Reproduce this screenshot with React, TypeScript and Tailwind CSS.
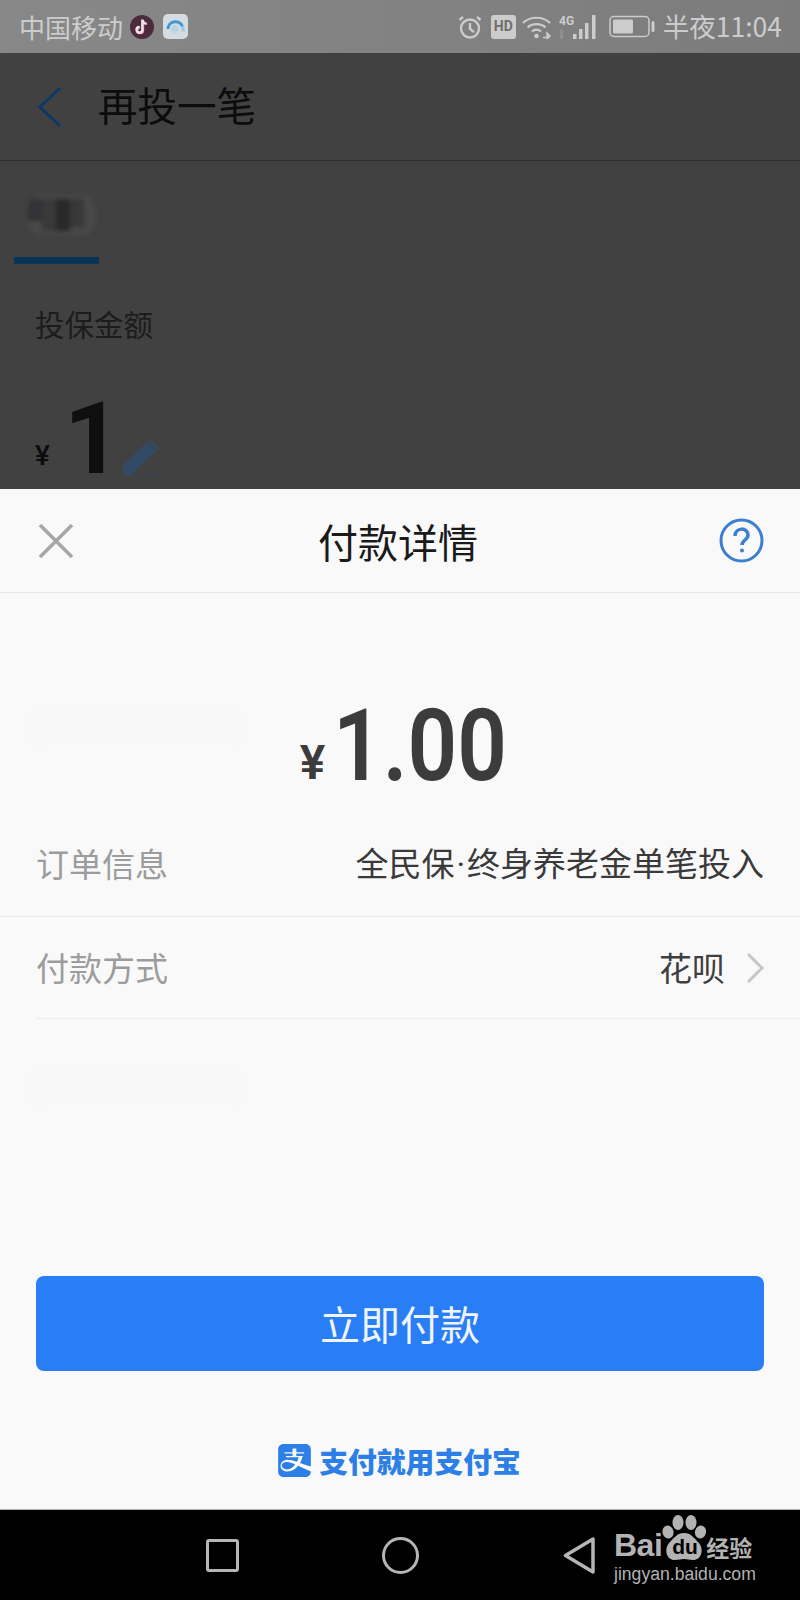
import { SiAlipay } from 'react-icons/si';

const CJK = "font-['Noto_Sans_CJK_SC','Noto_Sans',sans-serif]";

function TikTokIcon() {
  return (
    <svg width="24" height="24" viewBox="0 0 24 24">
      <circle cx="12" cy="12" r="12" fill="#4d2a3c" />
      <path d="M13 5v10.2a2.9 2.9 0 1 1-2.9-2.9" fill="none" stroke="#f4a6b8" strokeWidth="2.4" />
      <path d="M12.2 4.6v10.2a2.9 2.9 0 1 1-2.9-2.9M12.4 5c.4 2.4 2 3.7 4.4 3.9" fill="none" stroke="#e8e8ec" strokeWidth="2.2" />
    </svg>
  );
}

function BrowserIcon() {
  return (
    <svg width="25" height="25" viewBox="0 0 25 25">
      <rect width="25" height="25" rx="5" fill="#d6dde2" />
      <path d="M5 15a7.500 7.500 0 0 1 14.500-2.500" fill="none" stroke="#3f97d8" strokeWidth="3" />
      <path d="M19.500 12.500a7.500 7.500 0 0 1 .5 5" fill="none" stroke="#9fc6de" strokeWidth="3" />
      <circle cx="12" cy="15" r="4" fill="#bcd3e0" />
    </svg>
  );
}

function StatusIcons() {
  return (
    <div className="flex items-center text-[#cccccc]">
      <svg width="24" height="24" viewBox="0 0 24 24" fill="none" stroke="currentColor" strokeWidth="2.400">
        <circle cx="12" cy="13.500" r="9" />
        <path d="M12 8v6l4 3M1.500 5 5 1.800M22.500 5 19 1.800" />
      </svg>
      <div className="ml-[9px] flex h-[24px] w-[25px] items-center justify-center rounded-[3px] bg-[#cccccc] font-['Roboto',sans-serif] text-[14px] font-bold text-[#6e6e6e]">
        HD
      </div>
      <svg className="ml-[6px]" width="30" height="24" viewBox="0 0 30 24" fill="none" stroke="currentColor" strokeWidth="2.200">
        <path d="M1 8c7-7 20-7 27 0M5.500 12.500c4.500-4.500 13.500-4.500 18 0M10 16.500c2.500-2.500 6.500-2.500 9 0" />
        <circle cx="14.500" cy="21" r="2.200" fill="currentColor" stroke="none" />
        <path d="M21 22.500h3M25 18v6l3-3z" strokeWidth="1.500" fill="currentColor" />
      </svg>
      <svg className="ml-[7px]" width="41" height="26" viewBox="0 0 41 26">
        <text x="0" y="11" fontSize="12" fontWeight="700" fill="currentColor" fontFamily="Roboto, sans-serif">4G</text>
        <rect x="1" y="16" width="3" height="9" fill="#8f8f8f" />
        <rect x="14" y="20" width="3.500" height="5" fill="currentColor" />
        <rect x="20" y="15" width="3.500" height="10" fill="currentColor" />
        <rect x="26" y="9" width="3.500" height="16" fill="currentColor" />
        <rect x="33" y="1" width="3.500" height="24" fill="currentColor" />
      </svg>
      <svg className="ml-[9px]" width="46" height="24" viewBox="0 0 46 24">
        <rect x="1" y="1.500" width="39" height="20" rx="4" fill="none" stroke="currentColor" strokeWidth="1.500" />
        <rect x="4" y="4.500" width="20" height="14" rx="1.500" fill="currentColor" />
        <rect x="42.500" y="6" width="3" height="11" rx="1.500" fill="currentColor" />
      </svg>
      <span className={`ml-[8px] text-[26.500px] leading-none ${CJK}`}>半夜11:04</span>
    </div>
  );
}

function BaiduMark() {
  return (
    <div className="absolute left-[614px] top-[1514px] w-[150px] text-[#b3b3b3]">
      <div className="flex h-[46px] items-end">
        <span className="font-['Liberation_Sans',sans-serif] text-[32px] font-bold leading-[30px] tracking-[-0.5px]">Bai</span>
        <div className="relative h-[45px] w-[44px] shrink-0">
          <svg width="44" height="45" viewBox="0 0 44 45" fill="currentColor">
            <ellipse cx="16" cy="7.500" rx="5.500" ry="7.500" />
            <ellipse cx="29" cy="7.500" rx="5.500" ry="7.500" />
            <ellipse cx="6" cy="17" rx="5.500" ry="6.500" transform="rotate(-15 6 17)" />
            <ellipse cx="38.500" cy="17" rx="5.500" ry="6.500" transform="rotate(15 38.500 17)" />
            <path d="M22 18c7 0 10 5 15 10 5 6 3 17-6 17-4 0-6-1-9-1s-5 1-9 1c-9 0-11-11-6-17 5-5 8-10 15-10z" />
          </svg>
          <span className="absolute left-[10px] top-[22px] font-['Liberation_Sans',sans-serif] text-[21px] font-bold leading-[20px] text-black">du</span>
        </div>
        <span className={`text-[23px] font-bold leading-[26px] ${CJK}`}>经验</span>
      </div>
      <div className="mt-[2px] font-['Liberation_Sans',sans-serif] text-[17.600px] leading-[24px]">jingyan.baidu.com</div>
    </div>
  );
}

export default function App() {
  return (
    <div className={`relative flex h-[1600px] w-[800px] flex-col overflow-hidden bg-[#414141] ${CJK}`}>
      {/* status bar */}
      <div className="flex h-[53px] shrink-0 items-center justify-between bg-gradient-to-r from-[#888888] to-[#7c7c7c] pl-[19px] pr-[18px] text-[#cccccc]">
        <div className="flex items-center">
          <span className="text-[26px] leading-none">中国移动</span>
          <span className="ml-[7px] flex"><TikTokIcon /></span>
          <span className="ml-[9px] flex"><BrowserIcon /></span>
        </div>
        <StatusIcons />
      </div>

      {/* page behind the sheet */}
      <div className="flex h-[108px] shrink-0 items-center border-b border-[#2e2e2e] pl-[37px]">
        <svg width="24" height="40" viewBox="0 0 24 40" fill="none" stroke="#0c3a66" strokeWidth="3">
          <path d="M23 1 3 20l20 19" />
        </svg>
        <span className="-mt-[5px] ml-[37px] text-[39.500px] leading-none text-[#0c0c0c]">再投一笔</span>
      </div>
      <div className="relative h-[103px] shrink-0">
        <div className="absolute left-[28px] top-[34px] flex h-[40px] w-[68px] overflow-hidden rounded-[14px] bg-[#484848] blur-[2px]">
          <div className="mt-[4px] h-[22px] w-[14px] bg-[#333337]" />
          <div className="mt-[4px] h-[32px] w-[14px] bg-[#393939]" />
          <div className="mt-[4px] h-[32px] w-[14px] bg-[#29292b]" />
          <div className="mt-[4px] h-[28px] w-[14px] bg-[#383838]" />
        </div>
        <div className="absolute bottom-0 left-[14px] h-[7px] w-[85px] bg-[#0a3358]" />
      </div>
      <div className="h-[225px] shrink-0 pl-[35px] pt-[42px]">
        <div className="text-[29.500px] leading-[34px] text-[#1c1c1c]">投保金额</div>
        <div className="mt-[60px] flex h-[76px] items-end">
          <span className="mb-[6px] font-['Roboto',sans-serif] text-[28px] font-medium leading-[28px] text-[#0c0c0c]">¥</span>
          <span className="ml-[14px] font-['Roboto',sans-serif] text-[100px] font-bold leading-[74px] text-[#0f0f0f]">1</span>
          <svg className="ml-[1px]" width="38" height="38" viewBox="0 0 38 38">
            <path d="M1 36V27L25 4l9 9-24 23z" fill="#334a66" />
            <path d="M28 1l9 9-2 2-9-9z" fill="#334a66" />
            <path d="M1 37h36" stroke="#334a66" strokeWidth="1" />
          </svg>
        </div>
      </div>

      {/* payment sheet */}
      <div className="relative flex flex-1 flex-col border-b border-[#b0b0b0] bg-[#f9f9f9]">
        {/* page text showing faintly through the sheet */}
        <div className="absolute left-[36px] top-[224px] h-[28px] w-[204px] bg-[#f8f8f8] blur-[4px]" />
        <div className="absolute left-[36px] top-[584px] h-[28px] w-[204px] bg-[#f8f8f8] blur-[4px]" />

        <div className="relative flex h-[104px] shrink-0 items-center justify-between border-b border-[#e6e6e6] pl-[38px] pr-[36px]">
          <svg width="36" height="36" viewBox="0 0 36 36" stroke="#a6a6a6" strokeWidth="3.500">
            <path d="M2 2l32 32M34 2 2 34" />
          </svg>
          <span className="ml-[3px] text-[40px] leading-none text-[#1a1a1a]">付款详情</span>
          <svg width="45" height="45" viewBox="0 0 45 45" fill="none" stroke="#3a7fd0" strokeWidth="3">
            <circle cx="22.500" cy="22.500" r="20.500" />
            <path d="M16 18c0-9 13-9 13-1 0 5-6 5-6 10" strokeWidth="3.500" />
            <circle cx="23" cy="32.500" r="2" fill="#3a7fd0" stroke="none" />
          </svg>
        </div>

        <div className="relative flex h-[220px] shrink-0 items-start justify-center pt-[108px] text-[#3c3c3c]">
          <span className="ml-[3px] mt-[40px] font-['Roboto',sans-serif] text-[48px] font-semibold leading-[44px]">¥</span>
          <span className="ml-[8px] inline-block w-[170px] origin-left scale-x-[0.87] font-['Roboto',sans-serif] text-[100px] font-semibold leading-[90px]">1.00</span>
        </div>

        <div className="relative flex h-[104px] shrink-0 items-center justify-between border-b border-[#ececec] px-[36px] pb-[2px]">
          <span className="text-[33px] leading-none text-[#9c9c9c]">订单信息</span>
          <span className="text-[33px] leading-none text-[#3a3a3a]">
            全民保<span className="mx-[2px] font-['Roboto',sans-serif]">·</span>终身养老金单笔投入
          </span>
        </div>
        <div className="relative ml-[36px] flex h-[102px] shrink-0 items-center justify-between border-b border-[#ececec] pr-[36px]">
          <span className="text-[33px] leading-none text-[#9c9c9c]">付款方式</span>
          <div className="flex items-center">
            <span className="text-[33px] leading-none text-[#3f3f3f]">花呗</span>
            <svg className="ml-[21px]" width="18" height="30" viewBox="0 0 18 30" fill="none" stroke="#c6c6c6" strokeWidth="3">
              <path d="M2 1l14 14L2 29" />
            </svg>
          </div>
        </div>

        <div className="relative mx-[36px] mt-[257px] flex h-[95px] shrink-0 items-center justify-center rounded-[8px] bg-[#2a7ef5] pb-[2px] text-[40px] leading-none text-[#f0f5fd]">
          立即付款
        </div>

        <div className="mt-[73px] flex items-center justify-center pr-[1px] text-[#2c7fe6]">
          <SiAlipay className="h-[33px] w-[33px]" />
          <span className="ml-[8px] text-[28.800px] font-black leading-[33px]">支付就用支付宝</span>
        </div>
      </div>

      {/* android nav bar */}
      <div className="flex h-[90px] shrink-0 items-center bg-black pl-[206px]">
        <div className="h-[33px] w-[33px] rounded-[3px] border-[3.500px] border-[#b5b5b5]" />
        <div className="ml-[143px] h-[37px] w-[37px] rounded-full border-[3.500px] border-[#b5b5b5]" />
        <svg className="ml-[144px]" width="32" height="37" viewBox="0 0 32 37" fill="none" stroke="#b5b5b5" strokeWidth="3.500" strokeLinejoin="round">
          <path d="M2.500 18.500 30 2v33z" />
        </svg>
      </div>

      <BaiduMark />
    </div>
  );
}
